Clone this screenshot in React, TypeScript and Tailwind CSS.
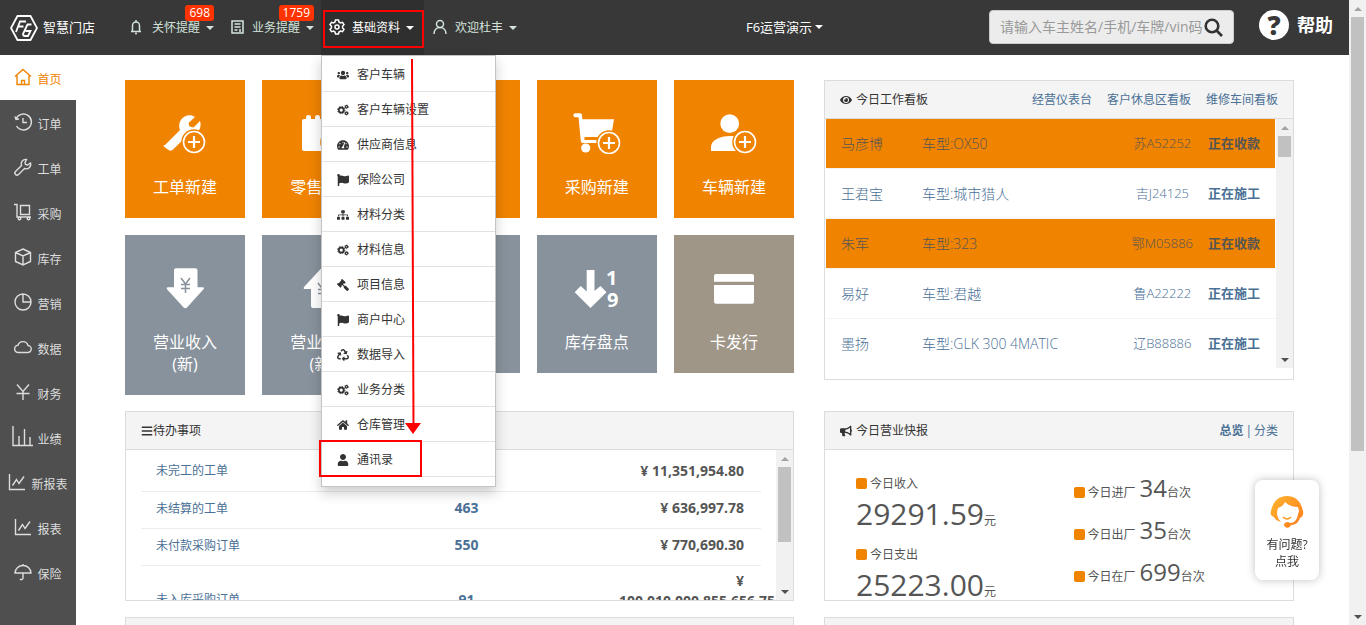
import type { ReactNode } from "react"
import {
  FaBars,
  FaBullhorn,
  FaEye,
  FaFlag,
  FaGavel,
  FaHome,
  FaRecycle,
  FaSitemap,
  FaTachometerAlt,
  FaUser,
  FaUsers,
} from "react-icons/fa"

// Bir büyük, iki küçük dişli
function Cogs({ className }: { className?: string }) {
  return (
    <svg viewBox="0 0 24 24" className={className} fill="none" stroke="currentColor" aria-hidden>
      <circle cx="8.500" cy="12" r="5" strokeWidth="3.500" />
      <circle cx="8.500" cy="12" r="7.200" strokeWidth="2" strokeDasharray="3 2.650" />
      <circle cx="19" cy="5.500" r="2.400" strokeWidth="2.400" />
      <circle cx="19" cy="5.500" r="3.900" strokeWidth="1.200" strokeDasharray="2 2.080" />
      <circle cx="19" cy="18.500" r="2.400" strokeWidth="2.400" />
      <circle cx="19" cy="18.500" r="3.900" strokeWidth="1.200" strokeDasharray="2 2.080" />
    </svg>
  )
}

const menuItems = [
  { label: "客户车辆", icon: FaUsers },
  { label: "客户车辆设置", icon: Cogs },
  { label: "供应商信息", icon: FaTachometerAlt },
  { label: "保险公司", icon: FaFlag },
  { label: "材料分类", icon: FaSitemap },
  { label: "材料信息", icon: Cogs },
  { label: "项目信息", icon: FaGavel, flip: true },
  { label: "商户中心", icon: FaFlag },
  { label: "数据导入", icon: FaRecycle },
  { label: "业务分类", icon: Cogs },
  { label: "仓库管理", icon: FaHome },
  { label: "通讯录", icon: FaUser },
]

const chartLine = <path d="M1.500 1v15.500H17M4.500 12.500l4-6 2.500 4 5-7" />

const sideItems: { label: string; icon: ReactNode }[] = [
  { label: "首页", icon: <path d="M1 8.500 9 1.500l8 7M3 7v9.500h12V7M7.500 16.500v-4h3v4" /> },
  { label: "订单", icon: <path d="M2 6a8 8 0 1 1 .5 7M1 3.500 2 6.500l3-.5M9 5v4.500h4" /> },
  { label: "工单", icon: <path d="M12.500 1.500a4.500 4.500 0 0 0-5 6L1.500 13.500a2 2 0 0 0 3 3L10.500 10.500a4.500 4.500 0 0 0 6-5.500l-3 2-2-.5-.5-2z" /> },
  {
    label: "采购",
    icon: (
      <>
        <path d="M0 1.500h3V14h14M6.500 2.500h9v9h-9z" />
        <circle cx="5.500" cy="15.500" r="1.300" />
        <circle cx="14.500" cy="15.500" r="1.300" />
      </>
    ),
  },
  { label: "库存", icon: <path d="M9 1l7.500 3.500v9L9 17l-7.500-3.500v-9zM1.500 4.500 9 8l7.500-3.500M9 8v9" /> },
  { label: "营销", icon: <path d="M9 1a8 8 0 1 0 8 8M9 1v8h8a8 8 0 0 0-8-8" /> },
  { label: "数据", icon: <path d="M4.500 14.500a3.600 3.600 0 0 1-.5-7.200 5.200 5.200 0 0 1 10 .2 3.500 3.500 0 0 1-.5 7z" /> },
  { label: "财务", icon: <path d="M3 1.500l6 7 6-7M9 8.500V17M2.500 10.500h13" /> },
  { label: "业绩", icon: <path d="M-1 -2v19.500h20M5 17V8M10.500 17V1M16 17v-8" /> },
  { label: "新报表", icon: chartLine },
  { label: "报表", icon: chartLine },
  { label: "保险", icon: <path d="M9 1v1.500M1 10a8 7.500 0 0 1 16 0zM9 10v5a1.700 1.700 0 0 1-3 1" /> },
]

const jobs = [
  { name: "马彦博", model: "OX50", plate: "苏A52252", paying: true },
  { name: "王君宝", model: "城市猎人", plate: "吉J24125", paying: false },
  { name: "朱军", model: "323", plate: "鄂M05886", paying: true },
  { name: "易好", model: "君越", plate: "鲁A22222", paying: false },
  { name: "墨扬", model: "GLK 300 4MATIC", plate: "辽B88886", paying: false },
]

const todos = [
  { label: "未完工的工单", count: "", amount: "11,351,954.80" },
  { label: "未结算的工单", count: "463", amount: "636,997.78" },
  { label: "未付款采购订单", count: "550", amount: "770,690.30" },
  { label: "未入库采购订单", count: "91", amount: "100,010,000,855,656.75", tall: true },
]

function Caret() {
  return <span aria-hidden className="h-0 w-0 border-x-4 border-t-4 border-x-transparent border-t-current" />
}

/** Gri kaydırma çubuğu: oklar + tutamaç */
function ScrollBar({ thumb }: { thumb: string }) {
  return (
    <div aria-hidden className="flex w-[17px] shrink-0 flex-col items-center justify-between bg-[#f1f1f1]">
      <div className="flex w-full flex-1 flex-col items-center">
        <div className="flex h-[17px] items-center">
          <span className="h-0 w-0 border-x-4 border-b-4 border-x-transparent border-b-[#a3a3a3]" />
        </div>
        <div className={`w-[13px] bg-[#c1c1c1] ${thumb}`} />
      </div>
      <div className="flex h-[17px] items-center">
        <span className="h-0 w-0 border-x-4 border-t-4 border-x-transparent border-t-[#505050]" />
      </div>
    </div>
  )
}

function NavItem({ label, icon, badge, active, children }: {
  label: string
  icon: ReactNode
  badge?: string
  active?: boolean
  children?: ReactNode
}) {
  return (
    <li className={`relative h-full ${active ? "bg-[#2f2f2f] pr-[3px] text-white" : "text-[#d3e3dc]"}`}>
      <button type="button" className="flex h-full items-center pr-[7px] pl-[9px] text-xs whitespace-nowrap">
        <svg viewBox="0 0 14 14" className="mr-2 mb-0.5 h-3.5 w-3.5 overflow-visible" fill="none" stroke="currentColor" strokeWidth="1.500" aria-hidden>
          {icon}
        </svg>
        <span className="mr-1.5 leading-[14px]">{label}</span>
        <Caret />
      </button>
      {badge && (
        <span className="absolute top-[5px] right-[7px] rounded-[3px] bg-[#ff3300] px-1 py-px text-xs leading-[14px] text-white">{badge}</span>
      )}
      {children}
    </li>
  )
}

function Tile({ label, color, icon }: { label?: string; color: string; icon?: ReactNode }) {
  return (
    <button
      type="button"
      className={`flex min-h-[138px] flex-col items-center self-start pt-[30px] pb-5 text-base leading-[22px] whitespace-pre-line text-white ${color}`}
    >
      <svg viewBox="0 0 60 44" className="mb-[22px] h-11 w-[60px]" fill="currentColor" aria-hidden>
        {icon}
      </svg>
      {label}
    </button>
  )
}

function PlusBadge({ x, y }: { x: number; y: number }) {
  return (
    <g className="fill-[#f08300] stroke-white" strokeWidth="1.600">
      <circle cx={x} cy={y} r="12" className="stroke-[#f08300]" />
      <circle cx={x} cy={y} r="10.500" />
      <path d={`M${x - 6} ${y}h12M${x} ${y - 6}v12`} strokeWidth="2.200" />
    </g>
  )
}

const orange = "bg-[#f08300]"
const slate = "bg-[#88929c]"

function Tiles() {
  return (
    <div className="grid grid-cols-5 gap-[17px]">
      <Tile
        label="工单新建"
        color={orange}
        icon={
          <>
            <path d="M10 35 25 20C22 12 28 4 37 5.500l3 1.500-6.500 6 1 3.500 4 1L45 11c2 6-1 12-7 14l-6 1-14.500 14q-2 1-4 0l-4-3q-1.500-1.200-.5-2z" />
            <PlusBadge x={39} y={32} />
          </>
        }
      />
      <Tile
        label="零售开单"
        color={orange}
        icon={
          <>
            <path d="M12 9h2V7q0-2 2.500-2T19 7v2h4V7q0-2 2.500-2T28 7v2h4V7q0-2 2.500-2T37 7v2h4V7q0-2 2.500-2T46 7v2h2q2 0 2 2v28q0 2-2 2H12q-2 0-2-2V11q0-2 2-2z" />
            <PlusBadge x={41} y={32} />
          </>
        }
      />
      <Tile color={orange} />
      <Tile
        label="采购新建"
        color={orange}
        icon={
          <>
            <path d="M8 3.300h5q2 0 2 2l.4 4H47L44 27H17.500v3H34v3H15.500q-1.500 0-1.700-2L11.500 7.300H8q-1.700-.3-1.700-2t1.700-2z" />
            <circle cx="18.700" cy="38" r="4.600" />
            <PlusBadge x={42} y={33} />
          </>
        }
      />
      <Tile
        label="车辆新建"
        color={orange}
        icon={
          <>
            <circle cx="25.700" cy="13.700" r="9.400" />
            <path d="M7 41v-4c0-7 9-11 19-11 5 0 9 .5 12 3v12z" />
            <PlusBadge x={41} y={32} />
          </>
        }
      />
      <Tile
        label={"营业收入\n(新)"}
        color={slate}
        icon={
          <>
            <path d="M21 3.300h19.500q2 0 2 2v17h5q2.500 0 1 2L32 42.500q-1.700 1.500-3.400 0L12 24.300q-1-2 1-2h6v-17q0-2 2-2z" />
            <path d="M26 13l4.500 6 4.500-6M30.500 19v9M26 19.500h9M26 23.500h9" fill="none" className="stroke-[#88929c]" strokeWidth="1.500" />
          </>
        }
      />
      <Tile
        label={"营业支出\n(新)"}
        color={slate}
        icon={
          <>
            <path d="M21 43h19.500q2 0 2-2V24h5q2.500 0 1-2L32 4q-1.700-1.500-3.400 0L12 22q-1 2 1 2h6v17q0 2 2 2z" />
            <path d="M26 18l4.500 6 4.500-6M30.500 24v9M26 24.500h9M26 28.500h9" fill="none" className="stroke-[#88929c]" strokeWidth="1.500" />
          </>
        }
      />
      <Tile color={slate} />
      <Tile
        label="库存盘点"
        color={slate}
        icon={
          <>
            <path d="M19.700 5h7.800v21l6-5 6 6.300L23.500 43 7.700 27.300l6-6.300 6 5.500z" />
            <text x="39" y="20" className="font-['Open_Sans',sans-serif] text-[20px] font-bold">1</text>
            <text x="40" y="42" className="font-['Open_Sans',sans-serif] text-[20px] font-bold">9</text>
          </>
        }
      />
      <Tile
        label="卡发行"
        color="bg-[#a09688]"
        icon={
          <>
            <path d="M12 9h36q2 0 2 2v5.700H10V11q0-2 2-2z" />
            <path d="M10 20h40v16.700q0 2-2 2H12q-2 0-2-2z" />
          </>
        }
      />
    </div>
  )
}

function Panel({ title, actions, className = "", children }: {
  title: ReactNode
  actions?: ReactNode
  className?: string
  children?: ReactNode
}) {
  return (
    <section className={`flex flex-col overflow-hidden border border-[#dcdcdc] ${className}`}>
      <header className="flex h-[38px] shrink-0 items-center justify-between border-b border-[#dcdcdc] bg-[#f4f4f4] px-[15px] text-[#333]">
        <h2 className="flex items-center gap-1">{title}</h2>
        <div className="flex text-[#4a7096]">{actions}</div>
      </header>
      {children}
    </section>
  )
}

function WorkBoard() {
  return (
    <Panel
      className="h-[300px]"
      title={<><FaEye className="h-3 w-3" aria-hidden />今日工作看板</>}
      actions={
        <div className="flex gap-[15px]">
          <a href="#dashboard">经营仪表台</a>
          <a href="#lounge">客户休息区看板</a>
          <a href="#workshop">维修车间看板</a>
        </div>
      }
    >
      <div className="flex h-[249px] overflow-hidden pl-px">
        <table className="mr-px h-[250px] flex-1 border-separate border-spacing-0 text-sm">
          <tbody>
            {jobs.map((job) => (
              <tr
                key={job.plate}
                className={`h-[50px] *:border-b *:border-[#f3f3f3] ${job.paying ? "text-[#555] *:bg-[#f08300] *:bg-clip-padding" : "text-[#4a7096]"}`}
              >
                <td className="w-24 pl-[15px] font-light">{job.name}</td>
                <td className="font-light">车型:{job.model}</td>
                <td className="w-[60px] text-center text-[13px] font-light whitespace-nowrap">{job.plate}</td>
                <td className="w-[82px] pr-[15px] text-right text-[13px] font-bold">{job.paying ? "正在收款" : "正在施工"}</td>
              </tr>
            ))}
          </tbody>
        </table>
        <ScrollBar thumb="h-[21px]" />
      </div>
    </Panel>
  )
}

function TodoPanel() {
  return (
    <Panel className="h-[190px]" title={<><FaBars className="-mr-1 h-3 w-3" aria-hidden />待办事项</>}>
      <div className="flex min-h-0 flex-1">
        <div className="min-w-0 flex-1 overflow-hidden px-[15px] pt-1">
          <table className="w-full table-fixed border-collapse">
            <tbody>
              {todos.map((todo) => (
                <tr key={todo.label} className={`border-b border-[#ececec] ${todo.tall ? "h-[72px]" : "h-[37px]"}`}>
                  <td className="w-[30%] pb-0.5 pl-[15px]">
                    <a href="#todo" className="text-[#4a7096]">{todo.label}</a>
                  </td>
                  <td className="w-[45%] pb-[3px] text-center text-sm font-bold text-[#4a7096]">{todo.count}</td>
                  <td className={`pr-[17px] pl-[13px] text-right text-sm font-bold text-[#555] ${todo.tall ? "pt-[5px] align-top leading-5" : "pb-[3px]"}`}>
                    ¥ {todo.amount}
                  </td>
                </tr>
              ))}
            </tbody>
          </table>
        </div>
        <ScrollBar thumb="h-[75px]" />
      </div>
    </Panel>
  )
}

function Square() {
  return <span aria-hidden className="mr-[3px] inline-block h-[11px] w-[11px] rounded-[2px] bg-[#f08300] align-[-1px]" />
}

function ReportPanel() {
  return (
    <Panel
      className="h-[190px]"
      title={<><FaBullhorn className="h-3 w-3" aria-hidden />今日营业快报</>}
      actions={
        <div className="flex gap-0.5">
          <a href="#all" className="font-bold">总览</a>|<a href="#category">分类</a>
        </div>
      }
    >
      <div className="grid grid-cols-[218fr_220fr] pl-[31px] text-[#555]">
        <dl className="pt-6">
          {[["今日收入", "29291.59"], ["今日支出", "25223.00"]].map(([label, value]) => (
            <div key={label} className="h-[71px]">
              <dt className="leading-5"><Square />{label}</dt>
              <dd className="leading-10"><span className="text-[30px]">{value}</span>元</dd>
            </div>
          ))}
        </dl>
        <dl className="pt-[17px]">
          {[["今日进厂", "34"], ["今日出厂", "35"], ["今日在厂", "699"]].map(([label, value]) => (
            <div key={label} className="flex h-[42px] items-baseline leading-[42px]">
              <dt className="mr-1"><Square />{label}</dt>
              <dd><span className="text-2xl leading-[42px]">{value}</span>台次</dd>
            </div>
          ))}
        </dl>
      </div>
    </Panel>
  )
}

function Header() {
  return (
    <header className="flex h-[55px] shrink-0 items-center bg-[#383838] text-white">
      <a href="#home" className="flex w-[121px] items-center gap-[5px] pl-2.5 text-[13px]">
        <svg viewBox="0 0 28 26" className="h-[26px] w-7" fill="none" stroke="currentColor" strokeWidth="1.800" aria-hidden>
          <path d="M7.500 1h13L27 13l-6.500 12h-13L1 13z" />
          <path d="M6 17l4-10.500h6M8.500 11.500h5" />
          <path d="M21.500 9.500h-4L13 19q0 2 2 2h3l2.500-5h-5" />
        </svg>
        智慧门店
      </a>
      <nav aria-label="主菜单" className="h-full">
        <ul className="flex h-full">
          <NavItem
            label="关怀提醒"
            badge="698"
            icon={<path d="M1 11.500h10M2.500 11V5.500a3.500 3.500 0 0 1 7 0V11M6 0v2M5 13.500h2" />}
          />
          <NavItem label="业务提醒" badge="1759" icon={<path d="M2 1h11v12H2zM4.500 4h6M4.500 7h6M4.500 10h3M10 9v3" />} />
          <NavItem
            label="基础资料"
            active
            icon={
              <>
                <path d="M5.500 0h3l.5 2 1.500.9 2-.6L14 4.700 12.600 6v2L14 9.300l-1.500 2.400-2-.6L9 12l-.5 2h-3L5 12l-1.500-.9-2 .6L0 9.300 1.400 8V6L0 4.700l1.500-2.400 2 .6L5 2z" />
                <circle cx="7" cy="7" r="2" />
              </>
            }
          >
            <ul className="absolute top-full left-0 z-20 w-[175px] border border-[#c4c4c4] bg-white pt-px pb-[9px] text-[#333] shadow-[0_6px_12px_rgba(0,0,0,0.2)]">
              {menuItems.map(({ label, icon: Icon, flip }) => (
                <li key={label} className="border-b border-[#e2e2e2]">
                  <a href="#menu" className="flex h-[34px] items-center gap-2 pt-0.5 pl-[15px]">
                    <Icon className={flip ? "h-3 w-3 -scale-x-100" : "h-3 w-3"} />
                    {label}
                  </a>
                </li>
              ))}
            </ul>
            <div aria-hidden className="absolute top-2.5 left-0.5 z-30 h-[38px] w-[101px] border-2 border-[#f00]" />
            <div aria-hidden className="absolute top-[440px] -left-0.5 z-30 h-[37px] w-[103px] border-2 border-[#f00]" />
            <svg viewBox="0 0 16 376" className="absolute top-[59px] left-[84px] z-30 h-[376px] w-4" aria-hidden>
              <path d="M7 0l1.500 366" stroke="#f00" strokeWidth="2" />
              <path d="M0 364h16l-8 11z" fill="#f00" />
            </svg>
          </NavItem>
          <NavItem label="欢迎杜丰" icon={<><circle cx="7" cy="4" r="3.500" /><path d="M1 14c0-4 2.500-6.500 6-6.500s6 2.500 6 6.500" /></>} />
        </ul>
      </nav>
      <div className="flex flex-1 justify-center">
        <button type="button" className="ml-14 flex items-center gap-[3px] text-[13px]">
          F6运营演示
          <Caret />
        </button>
      </div>
      <form className="mb-px flex h-[34px] w-[245px] items-center rounded-[4px] border border-[#ccc] bg-[#ececec] pr-2.5 pl-2.5">
        <input
          type="text"
          aria-label="搜索"
          placeholder="请输入车主姓名/手机/车牌/vin码"
          className="min-w-0 flex-1 bg-transparent text-sm text-[#333] outline-none placeholder:text-[#999]"
        />
        <button type="button" aria-label="查询" className="text-[#333]">
          <svg viewBox="0 0 19 19" className="h-[19px] w-[19px]" fill="none" stroke="currentColor" strokeWidth="2.600" aria-hidden>
            <circle cx="8" cy="8" r="6.300" />
            <path d="M12.500 12.500l5.500 5.500" />
          </svg>
        </button>
      </form>
      <a href="#help" className="mr-4 mb-[5px] ml-[25px] flex items-center gap-2 text-lg font-bold">
        <span className="flex h-[30px] w-[30px] items-center justify-center rounded-full bg-white text-[26px] leading-[30px] font-extrabold text-[#383838]">?</span>
        帮助
      </a>
    </header>
  )
}

function Sidebar() {
  return (
    <nav aria-label="侧边栏" className="w-[76px] shrink-0 bg-[#4f4f4f] text-[#ddd]">
      {sideItems.map(({ label, icon }, i) => (
        <a
          key={label}
          href="#side"
          className={`flex h-[45px] items-center justify-center gap-[5px] ${i === 0 ? "bg-white text-[#f08300]" : ""}`}
        >
          <svg viewBox="0 0 18 18" className="mb-0.5 h-[18px] w-[18px] overflow-visible" fill="none" stroke="currentColor" strokeWidth="1.400" aria-hidden>
            {icon}
          </svg>
          <span className="pt-1">{label}</span>
        </a>
      ))}
    </nav>
  )
}

export default function App() {
  return (
    <div className="flex h-screen overflow-hidden bg-white font-['Open_Sans','Noto_Sans_CJK_SC',sans-serif] text-xs text-[#333]">
      <div className="flex min-w-0 flex-1 flex-col">
        <Header />
        <div className="flex min-h-0 flex-1">
          <Sidebar />
          <main className="flex-1 overflow-hidden pt-[25px] pr-[55px] pl-[49px]">
            <div className="grid grid-cols-[669fr_470fr] items-start gap-x-[30px] gap-y-4">
              <Tiles />
              <WorkBoard />
              <TodoPanel />
              <ReportPanel />
              <Panel title="" className="h-[190px]" />
              <Panel title="" className="h-[190px]" />
            </div>
          </main>
        </div>
      </div>
      <ScrollBar thumb="h-[434px]" />

      <button
        type="button"
        className="fixed right-[47px] bottom-[45px] flex h-[100px] w-16 flex-col items-center rounded-lg bg-white pt-4 text-xs leading-[17px] text-[#333] shadow-[0_0_8px_rgba(0,0,0,0.25)]"
      >
        <svg viewBox="0 0 34 32" className="mb-2 h-8 w-[34px]" aria-hidden>
          <defs>
            <linearGradient id="agent" x1="0" y1="0" x2="1" y2="1">
              <stop offset="0" stopColor="#fdb62f" />
              <stop offset="1" stopColor="#ff7a1a" />
            </linearGradient>
          </defs>
          <path
            d="M1 15C3 5 9 0 17 0s14 5 16 15c1 4-1 6-3 7-2 5-5 7-9 7-1 4-7 3-7 0s4-4 6-2c3 0 6-2 7-5l2-7-1-4c-4 0-9-1-13-5-1 3-4 5-7 6l-1 4c0 4 1 7 4 10-4-1-6-3-7-5-3-1-4-3-3-6z"
            fill="url(#agent)"
          />
          <path d="M13 21q4 4 8 0" stroke="#ff9a24" strokeWidth="1.500" fill="none" />
        </svg>
        <span>有问题?</span>
        <span>点我</span>
      </button>
    </div>
  )
}
